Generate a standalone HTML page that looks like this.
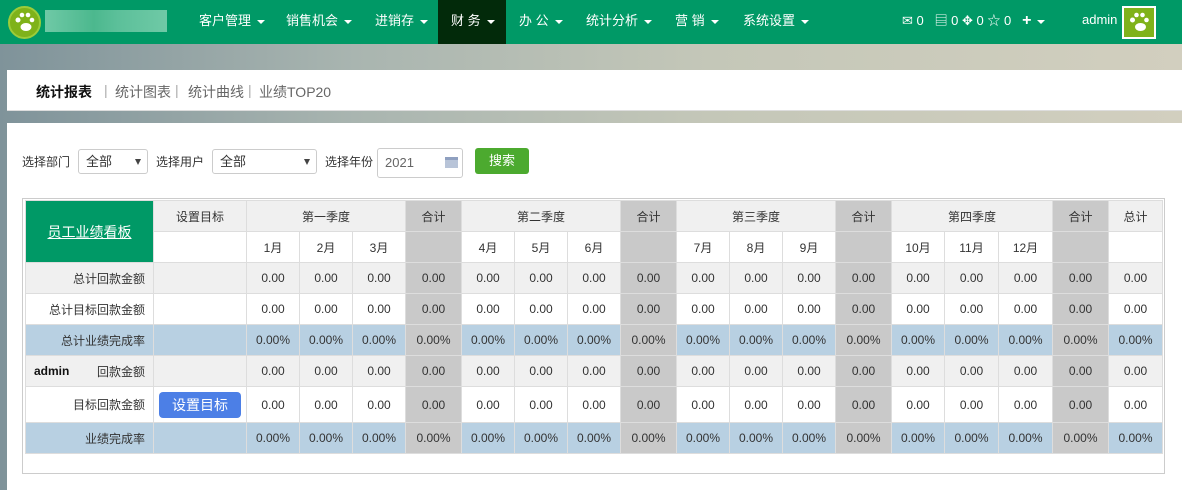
<!DOCTYPE html>
<html><head><meta charset="utf-8"><style>
*{margin:0;padding:0;box-sizing:border-box}
body{width:1182px;height:490px;overflow:hidden;font-family:"Liberation Sans","Noto Sans CJK SC",sans-serif;font-size:12px;color:#333;background:linear-gradient(90deg,#7f939a 0%,#a9b5b0 30%,#c4c7b8 60%,#d2cfbf 100%);position:relative}
.nav{position:absolute;left:0;top:0;width:1182px;height:44px;background:#009966;color:#fff}
.logo{position:absolute;left:8px;top:6px;width:33px;height:33px;border-radius:50%;background:#7fb21a;border:2px solid #9ccc3a}
.blur{position:absolute;left:45px;top:10px;width:122px;height:22px;background:linear-gradient(90deg,#6fc9a6,#4cb88e 40%,#5cc09a 60%,#6fc9a6)}
.mi{position:absolute;top:-1px;height:44px;line-height:44px;font-size:13px;color:#fff}
.mi b{display:inline-block;width:0;height:0;border-left:4px solid transparent;border-right:4px solid transparent;border-top:4px solid #fff;margin-left:6px;vertical-align:middle}
.act{background:#022a0a;top:0}
.tabs{position:absolute;left:7px;top:70px;width:1175px;height:41px;background:#fff;border-bottom:1px solid #ddd}
.tabs span{position:absolute;top:12px;font-size:14px;color:#666}
.panel{position:absolute;left:7px;top:123px;width:1175px;height:367px;background:#fff}
.lbl{position:absolute;font-size:12px;color:#333}
.sel{position:absolute;height:25px;border:1px solid #ccc;border-radius:3px;background:#fff;font-size:13px;line-height:23px;padding-left:7px}
.sel i{position:absolute;right:6px;top:9px;border-left:3px solid transparent;border-right:3px solid transparent;border-top:6px solid #444}
.box{position:absolute;left:22px;top:198px;width:1143px;height:276px;border:1px solid #ccc}
table{position:absolute;left:25px;top:200px;border-collapse:collapse;table-layout:fixed}
td{border:1px solid #ddd;text-align:center;font-size:12px;color:#333;height:31px;padding:0}
.g{background:#c9c9c9}
.l{background:#f0f0f0}
.b{background:#b8d0e2}
.r{text-align:right;padding-right:8px}
</style></head><body>
<div class="nav">
<div class="logo"><svg width="29" height="29" viewBox="0 0 29 29"><circle cx="8" cy="12" r="2.5" fill="#fff"/><circle cx="12" cy="7" r="2.3" fill="#fff"/><circle cx="18" cy="7" r="2.3" fill="#fff"/><circle cx="22" cy="12" r="2.3" fill="#fff"/><ellipse cx="16" cy="19" rx="5.5" ry="4" fill="#fff"/></svg></div>
<div class="blur"></div>
<div class="mi" style="left:199px">客户管理<b></b></div>
<div class="mi" style="left:286px">销售机会<b></b></div>
<div class="mi" style="left:375px">进销存<b></b></div>
<div class="mi act" style="left:438px;width:68px;padding-left:13px;line-height:42px">财 务<b></b></div>
<div class="mi" style="left:519px">办 公<b></b></div>
<div class="mi" style="left:586px">统计分析<b></b></div>
<div class="mi" style="left:675px">营 销<b></b></div>
<div class="mi" style="left:743px">系统设置<b></b></div>
<div class="mi" style="left:902px;font-size:13px">✉ 0&nbsp;&nbsp;&nbsp;▤ 0 ✥ 0 ☆ 0&nbsp;&nbsp;&nbsp;<span style="font-size:16px;font-weight:bold">+</span><b></b></div>
<div class="mi" style="left:1082px;top:-2px;font-size:13px">admin</div>
<div style="position:absolute;left:1122px;top:6px;width:34px;height:33px;background:#7fb21a;border:2px solid #fff"><svg width="30" height="29" viewBox="0 0 29 29"><circle cx="8" cy="12" r="2.5" fill="#fff"/><circle cx="12" cy="7" r="2.3" fill="#fff"/><circle cx="18" cy="7" r="2.3" fill="#fff"/><circle cx="22" cy="12" r="2.3" fill="#fff"/><ellipse cx="16" cy="19" rx="5.5" ry="4" fill="#fff"/></svg></div>
</div>
<div class="tabs">
<span style="left:29px;color:#111;font-weight:bold">统计报表</span>
<span style="left:97px;color:#aaa">|</span>
<span style="left:108px">统计图表</span><span style="left:168px;color:#aaa">|</span>
<span style="left:181px">统计曲线</span><span style="left:241px;color:#aaa">|</span>
<span style="left:252px">业绩TOP20</span>
</div>
<div class="panel"></div>
<div class="lbl" style="left:22px;top:153px">选择部门</div>
<div class="sel" style="left:78px;top:149px;width:70px">全部<i></i></div>
<div class="lbl" style="left:156px;top:153px">选择用户</div>
<div class="sel" style="left:212px;top:149px;width:105px">全部<i></i></div>
<div class="lbl" style="left:325px;top:153px">选择年份</div>
<div class="sel" style="left:377px;top:148px;width:86px;height:30px;line-height:28px;color:#666">2021<span style="position:absolute;right:4px;top:8px;width:13px;height:11px;background:#b8c4d8;border-top:3px solid #8fa0c0"></span></div>
<div style="position:absolute;left:475px;top:148px;width:54px;height:26px;background:#4caa2f;border-radius:3px;color:#fff;font-size:13px;line-height:26px;text-align:center">搜索</div>
<div class="box"></div>
<table>
<colgroup><col style="width:128px"><col style="width:93px"><col style="width:53px"><col style="width:53px"><col style="width:53px"><col style="width:56px"><col style="width:53px"><col style="width:53px"><col style="width:53px"><col style="width:56px"><col style="width:53px"><col style="width:53px"><col style="width:53px"><col style="width:56px"><col style="width:53px"><col style="width:54px"><col style="width:54px"><col style="width:56px"><col style="width:54px"></colgroup>
<tr><td rowspan="2" style="background:#009966;color:#fff;font-size:14px;text-decoration:underline">员工业绩看板</td><td class="l">设置目标</td><td class="l" colspan="3">第一季度</td><td class="g">合计</td><td class="l" colspan="3">第二季度</td><td class="g">合计</td><td class="l" colspan="3">第三季度</td><td class="g">合计</td><td class="l" colspan="3">第四季度</td><td class="g">合计</td><td class="l">总计</td></tr>
<tr><td></td><td>1月</td><td>2月</td><td>3月</td><td class="g"></td><td>4月</td><td>5月</td><td>6月</td><td class="g"></td><td>7月</td><td>8月</td><td>9月</td><td class="g"></td><td>10月</td><td>11月</td><td>12月</td><td class="g"></td><td></td></tr>
<tr class="l"><td class="r">总计回款金额</td><td></td><td>0.00</td><td>0.00</td><td>0.00</td><td class="g">0.00</td><td>0.00</td><td>0.00</td><td>0.00</td><td class="g">0.00</td><td>0.00</td><td>0.00</td><td>0.00</td><td class="g">0.00</td><td>0.00</td><td>0.00</td><td>0.00</td><td class="g">0.00</td><td>0.00</td></tr>
<tr><td class="r">总计目标回款金额</td><td></td><td>0.00</td><td>0.00</td><td>0.00</td><td class="g">0.00</td><td>0.00</td><td>0.00</td><td>0.00</td><td class="g">0.00</td><td>0.00</td><td>0.00</td><td>0.00</td><td class="g">0.00</td><td>0.00</td><td>0.00</td><td>0.00</td><td class="g">0.00</td><td>0.00</td></tr>
<tr class="b"><td class="r">总计业绩完成率</td><td></td><td>0.00%</td><td>0.00%</td><td>0.00%</td><td class="g">0.00%</td><td>0.00%</td><td>0.00%</td><td>0.00%</td><td class="g">0.00%</td><td>0.00%</td><td>0.00%</td><td>0.00%</td><td class="g">0.00%</td><td>0.00%</td><td>0.00%</td><td>0.00%</td><td class="g">0.00%</td><td>0.00%</td></tr>
<tr class="l"><td class="r" style="position:relative"><b style="position:absolute;left:8px;top:8px;color:#111">admin</b>回款金额</td><td></td><td>0.00</td><td>0.00</td><td>0.00</td><td class="g">0.00</td><td>0.00</td><td>0.00</td><td>0.00</td><td class="g">0.00</td><td>0.00</td><td>0.00</td><td>0.00</td><td class="g">0.00</td><td>0.00</td><td>0.00</td><td>0.00</td><td class="g">0.00</td><td>0.00</td></tr>
<tr><td class="r" style="height:36px">目标回款金额</td><td><div style="margin:0 auto;width:82px;height:26px;background:#4c7fe6;border-radius:4px;color:#fff;font-size:14px;line-height:26px">设置目标</div></td><td>0.00</td><td>0.00</td><td>0.00</td><td class="g">0.00</td><td>0.00</td><td>0.00</td><td>0.00</td><td class="g">0.00</td><td>0.00</td><td>0.00</td><td>0.00</td><td class="g">0.00</td><td>0.00</td><td>0.00</td><td>0.00</td><td class="g">0.00</td><td>0.00</td></tr>
<tr class="b"><td class="r">业绩完成率</td><td></td><td>0.00%</td><td>0.00%</td><td>0.00%</td><td class="g">0.00%</td><td>0.00%</td><td>0.00%</td><td>0.00%</td><td class="g">0.00%</td><td>0.00%</td><td>0.00%</td><td>0.00%</td><td class="g">0.00%</td><td>0.00%</td><td>0.00%</td><td>0.00%</td><td class="g">0.00%</td><td>0.00%</td></tr>
</table>
</body></html>
